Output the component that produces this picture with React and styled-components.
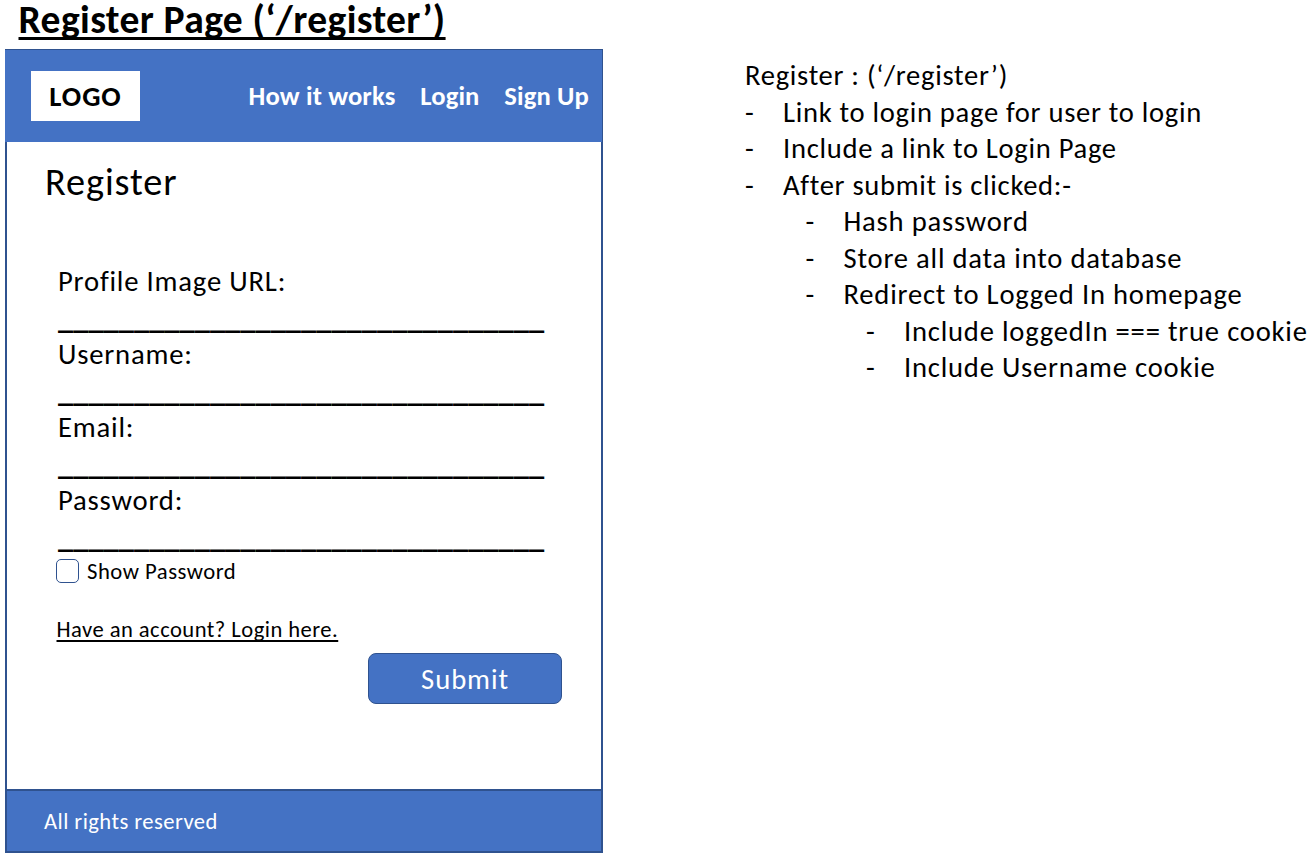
import React from 'react';
import styled, { createGlobalStyle } from 'styled-components';

const blue = '#4472c4';
const edge = '#2f528f';

const GlobalStyle = createGlobalStyle`
  *, *::before, *::after { box-sizing: border-box; }
  body {
    margin: 0;
    background: #fff;
    color: #000;
    font-family: Calibri, Carlito, Lato, sans-serif;
    font-size: 28.7px;
    letter-spacing: 0.72px;
    line-height: 36.5px;
    font-variant-ligatures: none;
  }
`;

const Page = styled.main`
  display: flex;
  align-items: flex-start;
  width: 1313px;
  height: 860px;
`;

const Mockup = styled.section`
  width: 603px;
  padding-left: 5px;
`;

const PageTitle = styled.h1`
  margin: 0 0 0 13.5px;
  height: 49px;
  font-size: 39.6px;
  letter-spacing: 0.38px;
  font-weight: 700;
  line-height: 40px;
  white-space: nowrap;
  text-decoration: underline;
  text-decoration-thickness: 2.5px;
  text-underline-offset: 4px;
  text-decoration-skip-ink: none;
`;

const Header = styled.header`
  display: flex;
  align-items: center;
  justify-content: space-between;
  height: 93px;
  padding: 0 13px 0 26px;
  background: ${blue};
  border-top: 1px solid ${edge};
  border-right: 1px solid ${edge};
`;

const Logo = styled.div`
  width: 109px;
  height: 50px;
  background: #fff;
  font-weight: 700;
  letter-spacing: 0.9px;
  line-height: 51px;
  text-align: center;
`;

const Nav = styled.nav`
  display: flex;
  gap: 24.8px;
  font-size: 26.6px;
  letter-spacing: 0.15px;
  font-weight: 700;
`;

const NavLink = styled.a`
  color: #fff;
  white-space: nowrap;
`;

const Content = styled.div`
  height: 647px;
  padding: 16px 39px 0 37px;
  border: solid ${edge};
  border-width: 0 2px;
`;

const Heading = styled.h2`
  margin: 0 0 0 1px;
  font-size: 38.3px;
  font-weight: 400;
  letter-spacing: 0.9px;
  line-height: 49px;
`;

const Form = styled.form`
  display: flex;
  flex-direction: column;
  margin: 57px 0 0 14px;
`;

const Field = styled.label`
  display: flex;
  flex-direction: column;
  height: 73px;
  letter-spacing: 0.8px;
`;

const Blank = styled.span`
  white-space: nowrap;
  font-size: 30.5px;
  font-weight: 700;
  letter-spacing: 0;
`;

const CheckRow = styled.label`
  display: flex;
  align-items: center;
  gap: 8px;
  height: 25px;
  margin: 2px 0 0 -2px;
  font-size: 22.7px;
  letter-spacing: 0.5px;
`;

const CheckLabel = styled.span`
  padding-top: 1px;
`;

const Checkbox = styled.span`
  width: 23px;
  height: 24px;
  border: 1.4px solid ${edge};
  border-radius: 5px;
`;

const LoginLink = styled.a`
  align-self: flex-start;
  margin: 31px 0 0 -1.5px;
  font-size: 22.6px;
  letter-spacing: 0.46px;
  line-height: 30px;
  white-space: nowrap;
  text-decoration: underline;
  text-decoration-thickness: 1.5px;
  text-underline-offset: 3px;
  text-decoration-skip-ink: none;
`;

const SubmitButton = styled.button`
  align-self: flex-end;
  width: 194px;
  height: 51px;
  margin-top: 9px;
  padding: 3px 0 0;
  border: 1.4px solid ${edge};
  border-radius: 8px;
  background: ${blue};
  color: #fff;
  font: inherit;
  letter-spacing: 0.9px;
`;

const Footer = styled.footer`
  display: flex;
  align-items: center;
  height: 64px;
  padding: 1px 0 0 37px;
  border: 2px solid ${edge};
  background: ${blue};
  color: #fff;
  font-size: 22.6px;
  letter-spacing: 0.44px;
`;

const Notes = styled.aside`
  margin: 58px 0 0 142px;
  white-space: nowrap;
  font-size: 28.6px;
  letter-spacing: 0.7px;
`;

const NotesTitle = styled.p`
  margin: 0;
`;

const NoteList = styled.ul`
  margin: 0;
  padding: 0 0 0 ${(p) => (p.$nested ? 23 : 0)}px;
  letter-spacing: ${(p) => (p.$nested ? 0.79 : 0.7)}px;
  list-style: none;
`;

const NoteLine = styled.div`
  display: flex;

  &::before {
    content: '-';
    flex: 0 0 38px;
  }
`;

const SubNotes = styled.div`
  padding-left: 37.5px;
`;

const fields = ['Profile Image URL:', 'Username:', 'Email:', 'Password:'];

const notes = [
  { text: 'Link to login page for user to login' },
  { text: 'Include a link to Login Page' },
  {
    text: 'After submit is clicked:-',
    children: [
      { text: 'Hash password' },
      { text: 'Store all data into database' },
      {
        text: 'Redirect to Logged In homepage',
        children: [
          { text: 'Include loggedIn === true cookie' },
          { text: 'Include Username cookie' },
        ],
      },
    ],
  },
];

function NoteTree({ items, nested }) {
  return (
    <NoteList $nested={nested}>
      {items.map((item) => (
        <li key={item.text}>
          <NoteLine>{item.text}</NoteLine>
          {item.children && (
            <SubNotes>
              <NoteTree items={item.children} nested />
            </SubNotes>
          )}
        </li>
      ))}
    </NoteList>
  );
}

export default function App() {
  return (
    <>
      <GlobalStyle />
      <Page>
        <Mockup>
          <PageTitle>Register Page (‘/register’)</PageTitle>
          <Header>
            <Logo>LOGO</Logo>
            <Nav>
              <NavLink>How it works</NavLink>
              <NavLink>Login</NavLink>
              <NavLink>Sign Up</NavLink>
            </Nav>
          </Header>
          <Content>
            <Heading>Register</Heading>
            <Form>
              {fields.map((label) => (
                <Field key={label}>
                  {label}
                  <Blank>{'_'.repeat(32)}</Blank>
                </Field>
              ))}
              <CheckRow>
                <Checkbox />
                <CheckLabel>Show Password</CheckLabel>
              </CheckRow>
              <LoginLink>Have an account? Login here.</LoginLink>
              <SubmitButton type="button">Submit</SubmitButton>
            </Form>
          </Content>
          <Footer>All rights reserved</Footer>
        </Mockup>
        <Notes>
          <NotesTitle>Register : (‘/register’)</NotesTitle>
          <NoteTree items={notes} />
        </Notes>
      </Page>
    </>
  );
}
